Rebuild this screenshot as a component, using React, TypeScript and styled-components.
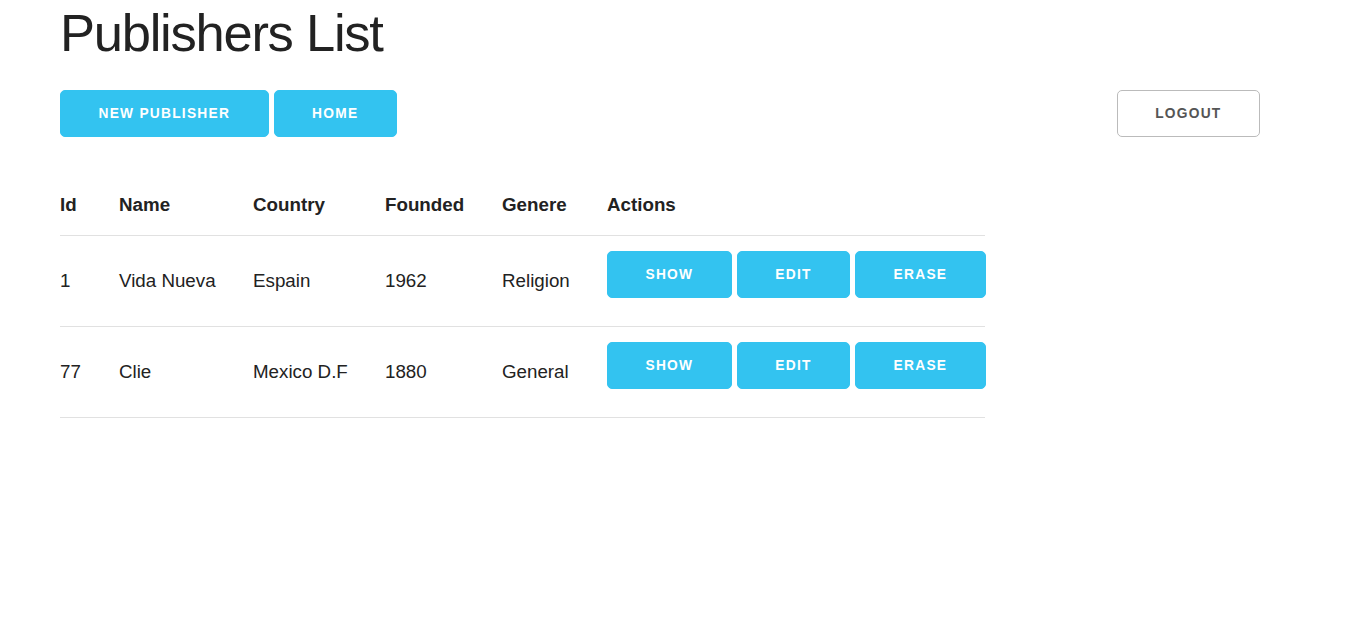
import React from 'react';
import styled, { createGlobalStyle } from 'styled-components';

const GlobalStyle = createGlobalStyle`
  html, body {
    margin: 0;
    padding: 0;
    background: #fff;
  }
  body {
    font-family: "Liberation Sans", Arial, sans-serif;
    font-size: 18.75px;
    line-height: 1.6;
    color: #222;
  }
`;

type Publisher = {
  id: number;
  name: string;
  country: string;
  founded: number;
  genere: string;
};

const publishers: Publisher[] = [
  { id: 1, name: 'Vida Nueva', country: 'Espain', founded: 1962, genere: 'Religion' },
  { id: 77, name: 'Clie', country: 'Mexico D.F', founded: 1880, genere: 'General' },
];

const columns = [
  { label: 'Id', width: 59 },
  { label: 'Name', width: 134 },
  { label: 'Country', width: 132 },
  { label: 'Founded', width: 117 },
  { label: 'Genere', width: 105 },
  { label: 'Actions', width: 378 },
];

const App = () => {
  return (
    <Page>
      <GlobalStyle />
      <Title>Publishers List</Title>
      <Toolbar>
        <ButtonGroup>
          <Button>New Publisher</Button>
          <Button>Home</Button>
        </ButtonGroup>
        <Button $outline>Logout</Button>
      </Toolbar>
      <Table>
        <thead>
          <tr>
            {columns.map((c) => (
              <Th key={c.label} $width={c.width}>
                {c.label}
              </Th>
            ))}
          </tr>
        </thead>
        <tbody>
          {publishers.map((p) => (
            <tr key={p.id}>
              <Td>{p.id}</Td>
              <Td>{p.name}</Td>
              <Td>{p.country}</Td>
              <Td>{p.founded}</Td>
              <Td>{p.genere}</Td>
              <Td>
                <Actions>
                  <Button>Show</Button>
                  <Button>Edit</Button>
                  <Button>Erase</Button>
                </Actions>
              </Td>
            </tr>
          ))}
        </tbody>
      </Table>
    </Page>
  );
};

export default App;

const Page = styled.main`
  padding: 0 60px;
`;

const Title = styled.h2`
  margin: 0 0 24px;
  font-size: 52.5px;
  line-height: 1.25;
  font-weight: 400;
  letter-spacing: -1.25px;
  color: #222;
`;

const Toolbar = styled.div`
  display: flex;
  justify-content: space-between;
  align-items: flex-start;
  width: 1200px;
  margin-bottom: 44px;
`;

const ButtonGroup = styled.div`
  display: flex;
  gap: 5px;
`;

const Button = styled.button<{ $outline?: boolean }>`
  box-sizing: border-box;
  height: 47px;
  padding: 1px 37.5px 0;
  border-radius: 5px;
  border: 1px solid ${(p) => (p.$outline ? '#bbb' : '#33c3f0')};
  background: ${(p) => (p.$outline ? '#fff' : '#33c3f0')};
  color: ${(p) => (p.$outline ? '#555' : '#fff')};
  font-family: "Liberation Sans", Arial, sans-serif;
  font-size: 13.75px;
  font-weight: 700;
  letter-spacing: 1.25px;
  line-height: 44px;
  text-transform: uppercase;
  white-space: nowrap;
  cursor: pointer;
`;

const Table = styled.table`
  width: 925px;
  table-layout: fixed;
  border-collapse: collapse;
  border-spacing: 0;
`;

const Th = styled.th<{ $width: number }>`
  width: ${(p) => p.$width}px;
  padding: 9px 0 15px;
  text-align: left;
  font-weight: 700;
  border-bottom: 1px solid #e1e1e1;
`;

const Td = styled.td`
  padding: 15px 0;
  text-align: left;
  vertical-align: middle;
  border-bottom: 1px solid #e1e1e1;
`;

const Actions = styled.div`
  display: flex;
  gap: 5px;
  padding-bottom: 13px;
`;
